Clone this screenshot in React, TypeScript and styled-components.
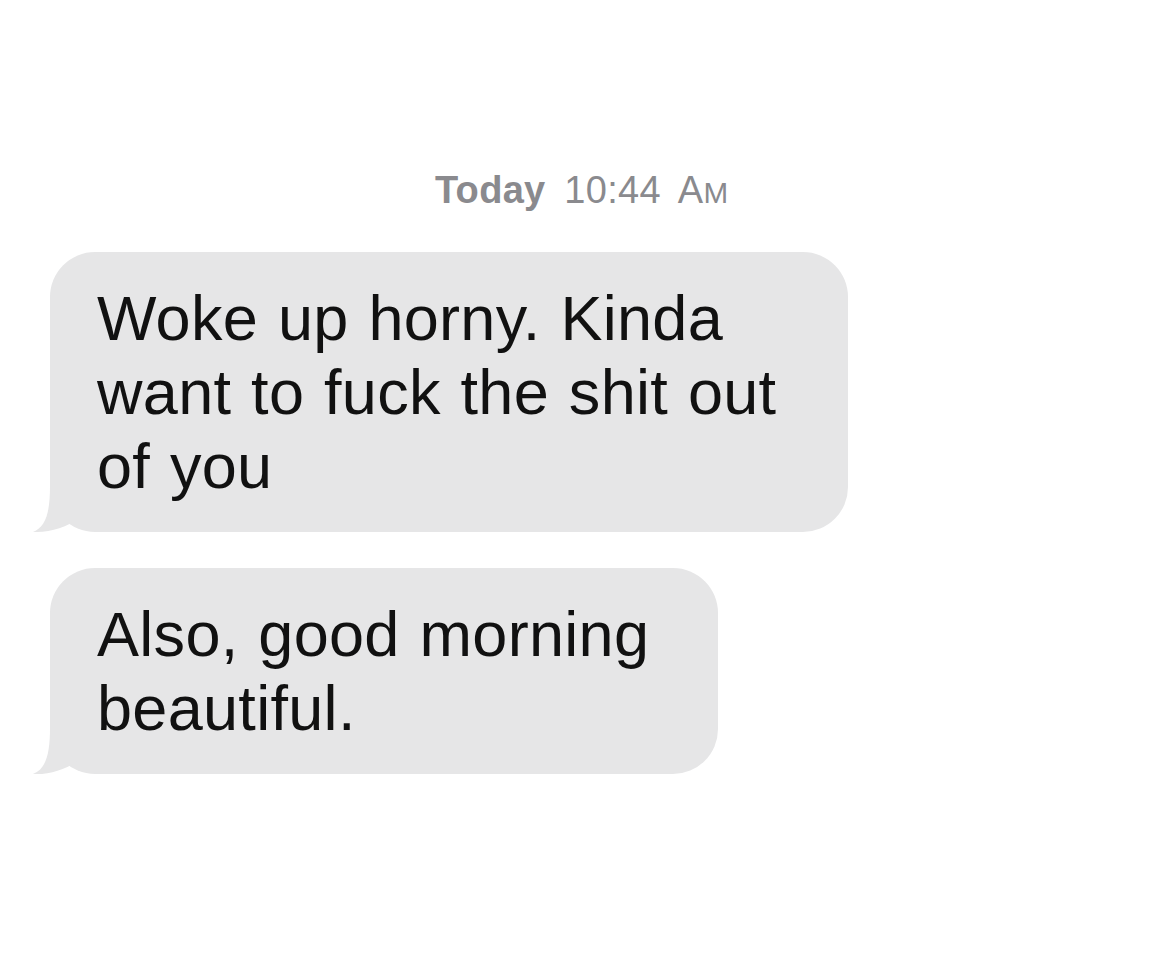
import React from "react";
import styled, { createGlobalStyle } from "styled-components";

const Global = createGlobalStyle`
  html, body {
    margin: 0;
    padding: 0;
    background: #ffffff;
  }
  body {
    font-family: "Liberation Sans", Arial, Helvetica, sans-serif;
    -webkit-font-smoothing: antialiased;
  }
`;

const Screen = styled.div`
  width: 1170px;
  height: 978px;
  background: #ffffff;
  display: flex;
  flex-direction: column;
  padding-top: 168px;
  box-sizing: border-box;
  overflow: hidden;
`;

const Timestamp = styled.div`
  text-align: center;
  font-size: 38px;
  line-height: 44px;
  color: #8a8a8e;
  margin-bottom: 37px;
  padding-right: 6px;
  word-spacing: 8px;
  letter-spacing: 0.3px;
`;

const Day = styled.span`
  font-weight: 700;
`;

const Meridiem = styled.span`
  font-size: 0.78em;
  letter-spacing: 1px;
`;

const Thread = styled.div`
  display: flex;
  flex-direction: column;
  align-items: flex-start;
  gap: 36px;
  padding-left: 50px;
`;

const Bubble = styled.div<{ $width: number }>`
  position: relative;
  width: ${(p) => p.$width}px;
  box-sizing: border-box;
  padding: 29px 30px 29px 47px;
  background: #e6e6e7;
  border-radius: 45px;
  color: #111111;
  font-size: 63px;
  line-height: 74px;
  letter-spacing: 0.3px;
  word-spacing: 2px;
`;

const Tail = styled.svg`
  position: absolute;
  left: -18px;
  bottom: 0;
  width: 60px;
  height: 50px;
  overflow: visible;
`;

const BubbleTail = () => (
  <Tail viewBox="0 0 60 50">
    <path
      d="M18 4 C18 30 14 45 1 50 C18 51 34 45 48 36 L48 4 Z"
      fill="#e6e6e7"
    />
  </Tail>
);

export default function App() {
  return (
    <>
      <Global />
      <Screen>
        <Timestamp>
          <Day>Today</Day> 10:44 A<Meridiem>M</Meridiem>
        </Timestamp>
        <Thread>
          <Bubble $width={798}>
            Woke up horny. Kinda want to fuck the shit out of you
            <BubbleTail />
          </Bubble>
          <Bubble $width={668}>
            Also, good morning beautiful.
            <BubbleTail />
          </Bubble>
        </Thread>
      </Screen>
    </>
  );
}
